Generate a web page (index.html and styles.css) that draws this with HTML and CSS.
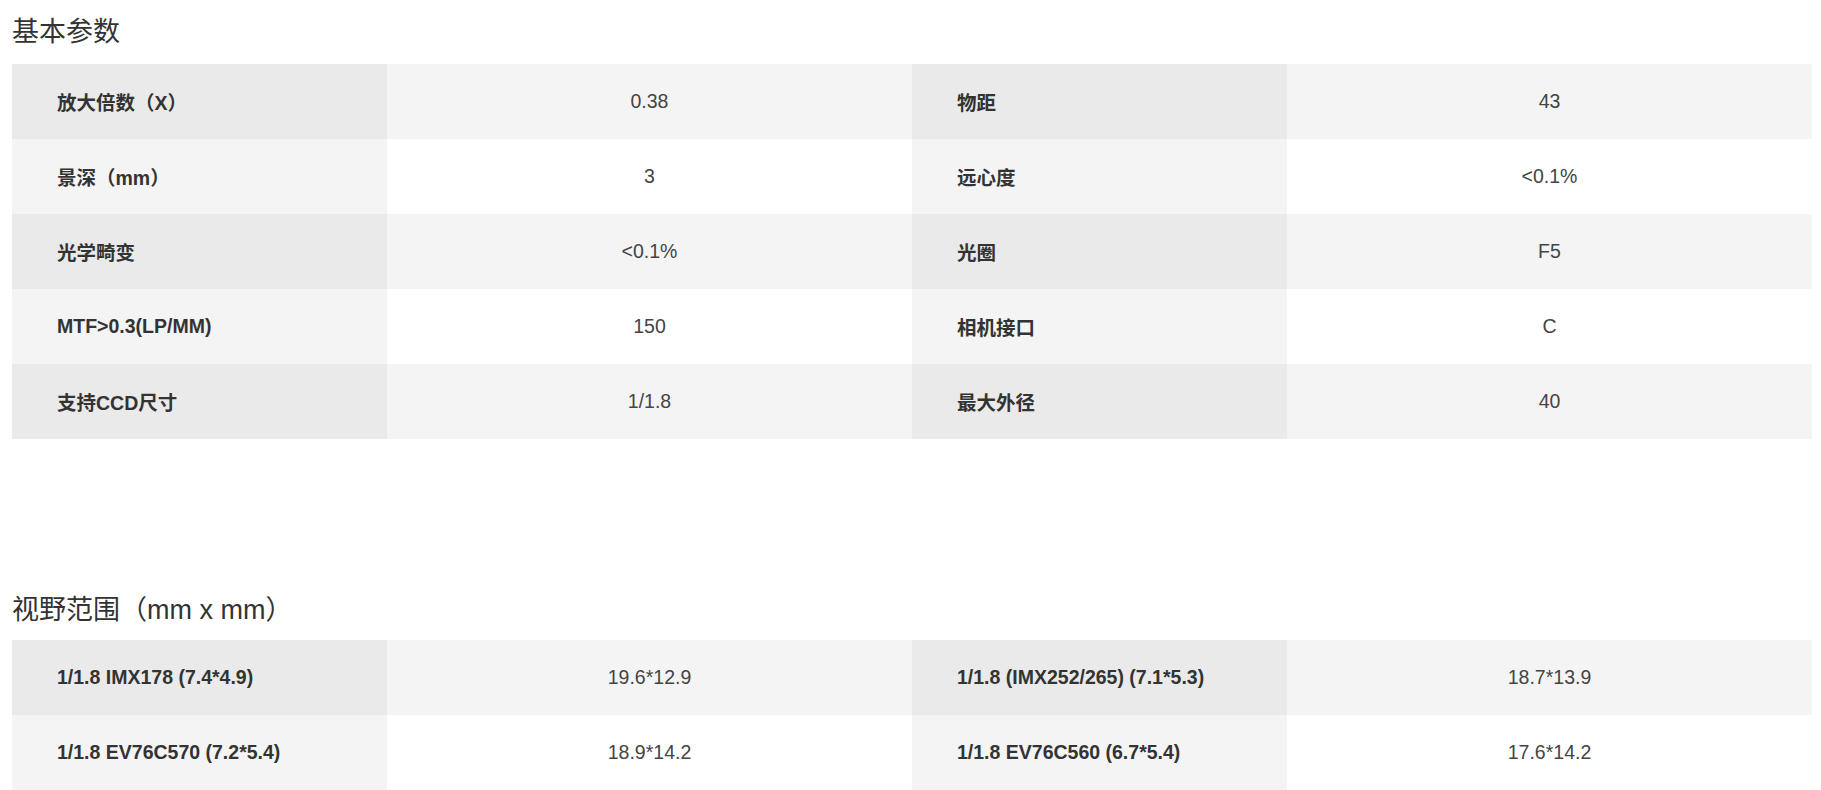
FILE: index.html
```html
<!DOCTYPE html>
<html lang="zh-CN">
  <head>
    <meta charset="UTF-8" />
    <meta name="viewport" content="width=device-width, initial-scale=1.0" />
    <title>远心镜头参数</title>
    <link rel="stylesheet" href="styles.css">
  </head>
  <body>
    <div class="page">
      <section class="spec">
        <h3>基本参数</h3>
        <table class="spec-table">
          <colgroup>
            <col class="col-key" />
            <col class="col-val" />
            <col class="col-key" />
            <col class="col-val" />
          </colgroup>
          <tr>
            <th>放大倍数（X）</th><td>0.38</td>
            <th>物距</th><td>43</td>
          </tr>
          <tr>
            <th>景深（mm）</th><td>3</td>
            <th>远心度</th><td>&lt;0.1%</td>
          </tr>
          <tr>
            <th>光学畸变</th><td>&lt;0.1%</td>
            <th>光圈</th><td>F5</td>
          </tr>
          <tr>
            <th>MTF&gt;0.3(LP/MM)</th><td>150</td>
            <th>相机接口</th><td>C</td>
          </tr>
          <tr>
            <th>支持CCD尺寸</th><td>1/1.8</td>
            <th>最大外径</th><td>40</td>
          </tr>
        </table>
      </section>

      <section class="spec spec-fov">
        <h3>视野范围（mm x mm）</h3>
        <table class="spec-table">
          <colgroup>
            <col class="col-key" />
            <col class="col-val" />
            <col class="col-key" />
            <col class="col-val" />
          </colgroup>
          <tr>
            <th>1/1.8 IMX178 (7.4*4.9)</th><td>19.6*12.9</td>
            <th>1/1.8 (IMX252/265) (7.1*5.3)</th><td>18.7*13.9</td>
          </tr>
          <tr>
            <th>1/1.8 EV76C570 (7.2*5.4)</th><td>18.9*14.2</td>
            <th>1/1.8 EV76C560 (6.7*5.4)</th><td>17.6*14.2</td>
          </tr>
        </table>
      </section>
    </div>
  </body>
</html>
```

FILE: styles.css
```css
html,
body {
  margin: 0;
  padding: 0;
  background: #ffffff;
  overflow: hidden;
}
body {
  font-family: "Liberation Sans", Arial, "Noto Sans CJK SC", sans-serif;
  color: #333333;
}
.page {
  width: 1800px;
  padding-left: 12px;
}
.spec h3 {
  margin: 0 0 14px;
  padding-top: 14px;
  font-size: 27px;
  line-height: 36px;
  font-weight: normal;
  color: #333333;
}
.spec-fov {
  margin-top: 139px;
}
.spec-fov h3 {
  margin-bottom: 12px;
}
.spec-table {
  width: 100%;
  border-collapse: collapse;
  table-layout: fixed;
}
.col-key {
  width: 375px;
}
.col-val {
  width: 525px;
}
.spec-table th,
.spec-table td {
  height: 75px;
  padding: 0;
  font-size: 19.5px;
  vertical-align: middle;
}
.spec-table th {
  padding-left: 45px;
  text-align: left;
  font-weight: bold;
  color: #333333;
}
.spec-table td {
  text-align: center;
  font-weight: normal;
  color: #444444;
}
.spec-table tr:nth-child(odd) th {
  background: #eaeaea;
}
.spec-table tr:nth-child(odd) td {
  background: #f4f4f4;
}
.spec-table tr:nth-child(even) th {
  background: #f4f4f4;
}
.spec-table tr:nth-child(even) td {
  background: #ffffff;
}
```
